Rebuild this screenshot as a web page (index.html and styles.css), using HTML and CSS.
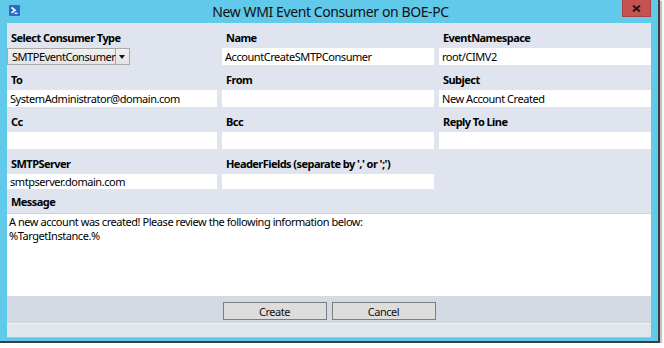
FILE: index.html
```html
<!DOCTYPE html>
<html lang="en">
<head>
    <meta charset="UTF-8">
    <title>New WMI Event Consumer on BOE-PC</title>
    <link rel="stylesheet" href="styles.css">
</head>
<body>
    <div class="window">
        <div class="titlebar">
            <svg class="app-icon" width="11" height="11" viewBox="0 0 11 11">
                <rect x="0" y="0" width="11" height="11" rx="1" fill="#2c6cc0"/>
                <path d="M2.5 2.5 L6 5.2 L2.5 7.8" fill="none" stroke="#fff" stroke-width="1.6"/>
                <path d="M5.5 8.3 H8.5" stroke="#fff" stroke-width="1.2"/>
            </svg>
            <div class="title">New WMI Event Consumer on BOE-PC</div>
            <div class="close">
                <svg width="9" height="7" viewBox="0 0 9 7">
                    <path d="M1 0.5 L8 6.5 M8 0.5 L1 6.5" stroke="#1b1b1b" stroke-width="2"/>
                </svg>
            </div>
        </div>
        <div class="content">
            <div class="fields">
                <div class="field">
                    <label>Select Consumer Type</label>
                    <div class="combo">
                        <span class="combo-text">SMTPEventConsumer</span>
                        <span class="combo-arrow"></span>
                    </div>
                </div>
                <div class="field">
                    <label>Name</label>
                    <div class="textbox">AccountCreateSMTPConsumer</div>
                </div>
                <div class="field">
                    <label>EventNamespace</label>
                    <div class="textbox">root/CIMV2</div>
                </div>
                <div class="field">
                    <label>To</label>
                    <div class="textbox">SystemAdministrator@domain.com</div>
                </div>
                <div class="field">
                    <label>From</label>
                    <div class="textbox"></div>
                </div>
                <div class="field">
                    <label>Subject</label>
                    <div class="textbox">New Account Created</div>
                </div>
                <div class="field">
                    <label>Cc</label>
                    <div class="textbox"></div>
                </div>
                <div class="field">
                    <label>Bcc</label>
                    <div class="textbox"></div>
                </div>
                <div class="field">
                    <label>Reply To Line</label>
                    <div class="textbox"></div>
                </div>
                <div class="field last">
                    <label>SMTPServer</label>
                    <div class="textbox">smtpserver.domain.com</div>
                </div>
                <div class="field last">
                    <label>HeaderFields (separate by ',' or ';')</label>
                    <div class="textbox"></div>
                </div>
            </div>
            <div class="message-head">Message</div>
            <div class="message">A new account was created! Please review the following information below:<br>%TargetInstance.%</div>
            <div class="actions">
                <button type="button">Create</button>
                <button type="button">Cancel</button>
            </div>
            <div class="status"></div>
        </div>
    </div>
</body>
</html>
```

FILE: styles.css
```css
* { padding: 0; margin: 0; box-sizing: border-box; }
body {
    background: #fff;
    font-family: "Noto Sans", "Open Sans", sans-serif;
    font-size: 11px;
    letter-spacing: -0.45px;
    color: #000;
}
.window {
    width: 660px;
    height: 343px;
    background: #61c9e9;
    border-right: 2px solid #3e3e3e;
    border-bottom: 2px solid #3e3e3e;
    box-shadow: 2px 1px 1px #c4c4c4;
    padding: 0 7px 3px 7px;
}
.titlebar {
    height: 23px;
    display: grid;
    grid-template-columns: 1fr auto 1fr;
    align-items: start;
}
.app-icon {
    margin: 5px 0 0 2px;
}
.title {
    font-size: 14px;
    letter-spacing: -0.4px;
    line-height: 23px;
    color: #111;
    padding-left: 3px;
}
.close {
    justify-self: end;
    width: 29px;
    height: 17px;
    background: #c75050;
    border: 1px solid #a84242;
    border-top: none;
    display: flex;
    justify-content: center;
    align-items: center;
}
.content {
    width: 644px;
    height: 315px;
    background: #dfe4ee;
}
.fields {
    display: grid;
    grid-template-columns: 210px 212px 212px;
    column-gap: 5px;
}
.field {
    padding-top: 7px;
}
.field label {
    display: block;
    font-weight: bold;
    letter-spacing: -0.55px;
    line-height: 16px;
    padding-left: 4px;
    margin-bottom: 2px;
}
.textbox {
    height: 17px;
    background: #fff;
    line-height: 17px;
    padding-left: 3px;
    white-space: nowrap;
}
.field.last .textbox {
    height: 15px;
    line-height: 15px;
}
.combo {
    width: 123px;
    height: 17px;
    display: flex;
    border: 1px solid #a9a9a9;
    background: linear-gradient(#f0f0f0, #e3e3e3);
}
.combo-text {
    flex: 1;
    line-height: 15px;
    padding-left: 4px;
    white-space: nowrap;
    border-right: 1px solid #a9a9a9;
}
.combo-arrow {
    width: 13px;
    position: relative;
}
.combo-arrow::after {
    content: "";
    position: absolute;
    left: 3px;
    top: 6px;
    border-left: 3px solid transparent;
    border-right: 3px solid transparent;
    border-top: 4px solid #111;
}
.message-head {
    font-weight: bold;
    letter-spacing: -0.55px;
    line-height: 16px;
    padding: 5px 0 3px 4px;
    border-bottom: 1px solid #c7d4e6;
}
.message {
    height: 82px;
    background: #fff;
    line-height: 13.5px;
    padding: 1px 2px;
}
.actions {
    height: 27px;
    background: #d4dae3;
    display: flex;
    justify-content: center;
    gap: 5px;
    padding-top: 6px;
}
button {
    width: 104px;
    height: 18px;
    font-family: inherit;
    font-size: 11px;
    letter-spacing: -0.45px;
    color: #111;
    background: #dddddd;
    border: 1px solid #7d7d7d;
}
.status {
    height: 15px;
    background: #e1e5ec;
    border-top: 1px solid #eef1f6;
    border-bottom: 1px solid #b9c1cc;
}
```
